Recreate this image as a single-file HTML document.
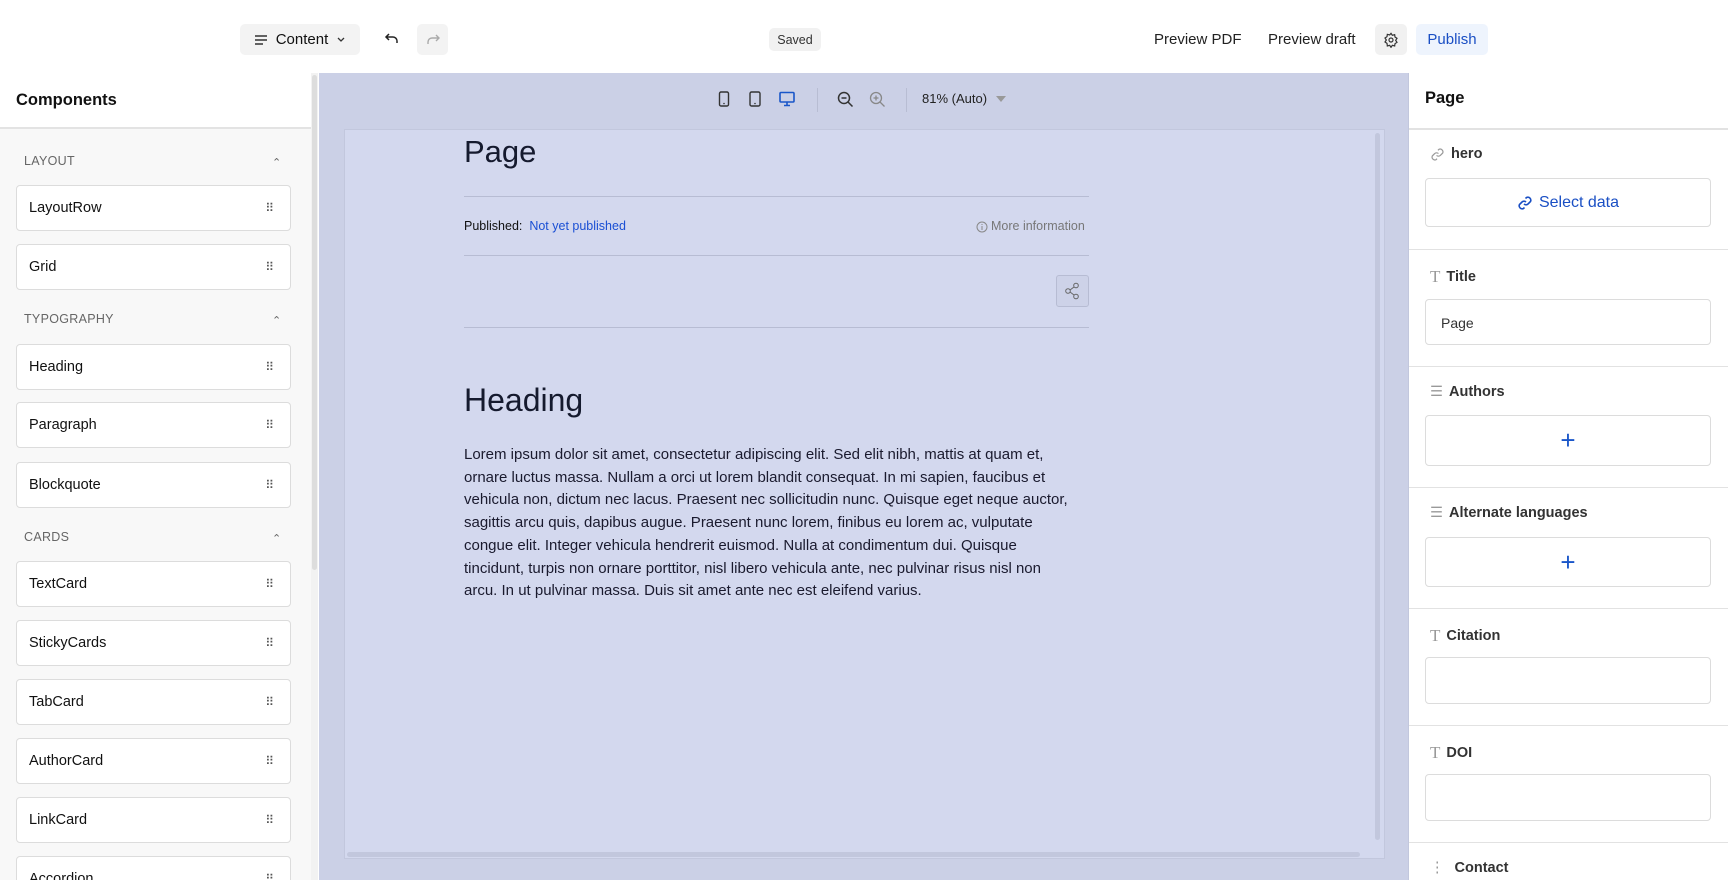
<!DOCTYPE html>
<html style="overflow:hidden"><head><meta charset="utf-8"><style>
*{box-sizing:border-box;margin:0;padding:0}
html,body{width:1728px;height:880px;overflow:hidden}
body{background:#fff;font-family:"Liberation Sans",sans-serif;color:#111}
#w{position:relative;width:1728px;height:880px;overflow:hidden}
.a{position:absolute}
.btn{position:absolute;border-radius:5px;display:flex;align-items:center;justify-content:center;font-size:15px}
.card{position:absolute;left:16px;width:275px;height:46px;border:1px solid #dcdcdc;border-radius:4px;background:#fff;font-size:14.5px;padding-left:12px;display:flex;align-items:center}
.card:after{content:"⠿";position:absolute;right:16px;font-size:12px;color:#555}
.sec{position:absolute;left:24px;font-size:12.5px;color:#666;letter-spacing:.3px}
.sec:after{content:"⌃";position:absolute;left:248px;top:2px;font-size:11px;color:#666}
.lbl{position:absolute;left:1430px;font-size:14.5px;font-weight:bold;color:#333;display:flex;align-items:center;gap:6px}
.box{position:absolute;left:1425px;width:286px;border:1px solid #dcdcdc;border-radius:4px;background:#fff}
.hr{position:absolute;left:1409px;width:319px;height:1px;background:#e2e2e2}
.plus{display:flex;align-items:center;justify-content:center;color:#1a56c9;font-size:26px;font-weight:300}
p.t{position:absolute;left:464px;width:621px;font-size:15px;line-height:22.7px;color:#1a1a2e}
</style></head><body><div id="w">
<div class="btn" style="left:240px;top:24px;width:120px;height:31px;background:#f3f3f3;gap:8px">
<svg width="14" height="12" viewBox="0 0 14 12"><path d="M1 2h12M1 6h12M1 10h8" stroke="#333" stroke-width="1.4"/></svg>Content
<svg width="10" height="8" viewBox="0 0 10 8"><path d="M2 2l3 3 3-3" stroke="#333" stroke-width="1.3" fill="none"/></svg></div>
<svg class="a" style="left:384px;top:32px" width="16" height="14" viewBox="0 0 16 14"><path d="M5 2L2 5l3 3M2 5h7a4 4 0 0 1 4 4v2" stroke="#222" stroke-width="1.5" fill="none"/></svg>
<div class="btn" style="left:417px;top:24px;width:31px;height:31px;background:#f3f3f3"><svg width="16" height="14" viewBox="0 0 16 14"><path d="M11 2l3 3-3 3M14 5H7a4 4 0 0 0-4 4v2" stroke="#aaa" stroke-width="1.4" fill="none"/></svg></div>
<div class="btn" style="left:769px;top:28px;width:52px;height:23px;background:#f1f1f1;font-size:12.5px;color:#333">Saved</div>
<div class="a" style="left:1154px;top:31px;font-size:15px;color:#222">Preview PDF</div>
<div class="a" style="left:1268px;top:31px;font-size:15px;color:#222">Preview draft</div>
<div class="btn" style="left:1375px;top:24px;width:32px;height:31px;background:#f1f1f1"><svg width="16" height="16" viewBox="0 0 24 24" fill="none" stroke="#333" stroke-width="1.8"><circle cx="12" cy="12" r="3"/><path d="M12 2l2 3 3.5-1 .5 3.5 3 2-2 3 2 3-3 2-.5 3.5-3.5-1-2 3-2-3-3.5 1L6 17l-3-2 2-3-2-3 3-2 .5-3.5 3.5 1z"/></svg></div>
<div class="btn" style="left:1416px;top:24px;width:72px;height:31px;background:#eef4fd;color:#1a4fc4">Publish</div>
<div class="a" style="left:0;top:73px;width:312px;height:56px;border-bottom:2px solid #e3e3e3;background:#fff"><div class="a" style="left:16px;top:18px;font-size:16.5px;font-weight:bold">Components</div></div>
<div class="a" style="left:0;top:129px;width:312px;height:751px;background:#f8f8f8"></div>
<div class="a" style="left:311px;top:73px;width:7px;height:807px;background:#f2f2f2"></div>
<div class="a" style="left:312px;top:75px;width:5px;height:495px;background:#ddd;border-radius:3px"></div>
<div class="sec" style="top:154px">LAYOUT</div>
<div class="card" style="top:185px">LayoutRow</div>
<div class="card" style="top:244px">Grid</div>
<div class="sec" style="top:312px">TYPOGRAPHY</div>
<div class="card" style="top:344px">Heading</div>
<div class="card" style="top:402px">Paragraph</div>
<div class="card" style="top:462px">Blockquote</div>
<div class="sec" style="top:530px">CARDS</div>
<div class="card" style="top:561px">TextCard</div>
<div class="card" style="top:620px">StickyCards</div>
<div class="card" style="top:679px">TabCard</div>
<div class="card" style="top:738px">AuthorCard</div>
<div class="card" style="top:797px">LinkCard</div>
<div class="card" style="top:856px">Accordion</div>
<div class="a" style="left:319px;top:73px;width:1090px;height:807px;background:#cbd0e6"></div>
<svg class="a" style="left:718px;top:91px" width="12" height="16" viewBox="0 0 12 16"><rect x="1.5" y="1" width="9" height="14" rx="1.5" stroke="#333" stroke-width="1.4" fill="none"/><circle cx="6" cy="12.5" r=".8" fill="#333"/></svg>
<svg class="a" style="left:749px;top:91px" width="12" height="16" viewBox="0 0 12 16"><rect x="1" y="1" width="10" height="14" rx="1.5" stroke="#333" stroke-width="1.4" fill="none"/><circle cx="6" cy="12.5" r=".8" fill="#333"/></svg>
<svg class="a" style="left:779px;top:91px" width="16" height="16" viewBox="0 0 16 16"><rect x="1" y="1.5" width="14" height="9.5" rx="1" stroke="#1a56c9" stroke-width="1.6" fill="none"/><path d="M8 11v3M5 14.5h6" stroke="#1a56c9" stroke-width="1.6"/></svg>
<div class="a" style="left:817px;top:88px;width:1px;height:24px;background:#b8bdd3"></div>
<svg class="a" style="left:837px;top:91px" width="17" height="17" viewBox="0 0 17 17"><circle cx="7" cy="7" r="5.5" stroke="#333" stroke-width="1.5" fill="none"/><path d="M11 11l4.5 4.5M4.5 7h5" stroke="#333" stroke-width="1.5"/></svg>
<svg class="a" style="left:869px;top:91px" width="17" height="17" viewBox="0 0 17 17"><circle cx="7" cy="7" r="5.5" stroke="#888" stroke-width="1.3" fill="none"/><path d="M11 11l4.5 4.5M4.5 7h5M7 4.5v5" stroke="#888" stroke-width="1.3"/></svg>
<div class="a" style="left:906px;top:88px;width:1px;height:24px;background:#b8bdd3"></div>
<div class="a" style="left:922px;top:91px;font-size:13px;color:#222">81% (Auto)</div>
<div class="a" style="left:996px;top:96px;width:0;height:0;border-left:5px solid transparent;border-right:5px solid transparent;border-top:6px solid #999"></div>
<div class="a" style="left:344px;top:129px;width:1041px;height:730px;background:#d3d8ee;border:1px solid #c2c7dd"></div>
<div class="a" style="left:1375px;top:133px;width:5px;height:707px;background:#c2c7dd;border-radius:3px"></div>
<div class="a" style="left:347px;top:852px;width:1013px;height:5px;background:#c2c7dd;border-radius:3px"></div>
<div class="a" style="left:464px;top:134px;font-size:31px;color:#151a2e">Page</div>
<div class="a" style="left:464px;top:196px;width:625px;height:1px;background:#b7bcd3"></div>
<div class="a" style="left:464px;top:219px;font-size:12.5px;line-height:15px;color:#111">Published:&nbsp; <span style="color:#1a4fd4">Not yet published</span></div>
<div class="a" style="left:976px;top:219px;font-size:12.5px;line-height:15px;color:#777;display:flex;align-items:center;gap:3px"><svg width="12" height="12" viewBox="0 0 12 12"><circle cx="6" cy="6" r="5" stroke="#888" fill="none"/><path d="M6 5v4M6 3v1" stroke="#888"/></svg>More information</div>
<div class="a" style="left:464px;top:255px;width:625px;height:1px;background:#b7bcd3"></div>
<div class="a" style="left:1056px;top:275px;width:33px;height:32px;border:1px solid #b7bcd3;border-radius:3px;background:#cdd2e8"></div>
<svg class="a" style="left:1064px;top:282px" width="17" height="18" viewBox="0 0 17 18"><circle cx="12" cy="3.5" r="2.3" stroke="#666" fill="none"/><circle cx="4" cy="9" r="2.3" stroke="#666" fill="none"/><circle cx="12" cy="14.5" r="2.3" stroke="#666" fill="none"/><path d="M6 8l4-3M6 10l4 3" stroke="#666"/></svg>
<div class="a" style="left:464px;top:327px;width:625px;height:1px;background:#b7bcd3"></div>
<div class="a" style="left:464px;top:382px;font-size:32px;color:#151a2e">Heading</div>
<p class="t" style="top:444px">Lorem ipsum dolor sit amet, consectetur adipiscing elit. Sed elit nibh, mattis at quam et, ornare luctus massa. Nullam a orci ut lorem blandit consequat. In mi sapien, faucibus et vehicula non, dictum nec lacus. Praesent nec sollicitudin nunc. Quisque eget neque auctor, sagittis arcu quis, dapibus augue. Praesent nunc lorem, finibus eu lorem ac, vulputate<br>congue elit. Integer vehicula hendrerit euismod. Nulla at condimentum dui. Quisque<br>tincidunt, turpis non ornare porttitor, nisl libero vehicula ante, nec pulvinar risus nisl non<br>arcu. In ut pulvinar massa. Duis sit amet ante nec est eleifend varius.</p>
<div class="a" style="left:1408px;top:73px;width:1px;height:807px;background:#c2c7dd"></div>
<div class="a" style="left:1425px;top:89px;font-size:16.5px;font-weight:bold">Page</div>
<div class="hr" style="top:128px;height:2px"></div>
<div class="lbl" style="top:146px"><svg width="15" height="15" viewBox="0 0 16 16" fill="none" stroke="#999" stroke-width="1.3"><path d="M7 9a3 3 0 0 0 4 0l2.5-2.5a3 3 0 0 0-4-4L8.5 3.5M9 7a3 3 0 0 0-4 0L2.5 9.5a3 3 0 0 0 4 4l1-1"/></svg>hero</div>
<div class="box plus" style="top:178px;height:49px;font-size:16px;color:#1a4fc4;gap:6px"><svg width="16" height="16" viewBox="0 0 16 16" fill="none" stroke="#1a4fc4" stroke-width="1.6"><path d="M7 9a3 3 0 0 0 4 0l2.5-2.5a3 3 0 0 0-4-4L8.5 3.5M9 7a3 3 0 0 0-4 0L2.5 9.5a3 3 0 0 0 4 4l1-1"/></svg>Select data</div>
<div class="hr" style="top:249px"></div>
<div class="lbl" style="top:267px"><span style="color:#999;font-weight:normal;font-family:'Liberation Serif',serif;font-size:17px">T</span>Title</div>
<div class="box" style="top:299px;height:46px;font-size:14px;color:#333;padding:15px 0 0 15px">Page</div>
<div class="hr" style="top:366px"></div>
<div class="lbl" style="top:384px"><span style="color:#999;font-weight:normal">☰</span>Authors</div>
<div class="box plus" style="top:415px;height:51px">+</div>
<div class="hr" style="top:487px"></div>
<div class="lbl" style="top:505px"><span style="color:#999;font-weight:normal">☰</span>Alternate languages</div>
<div class="box plus" style="top:537px;height:50px">+</div>
<div class="hr" style="top:608px"></div>
<div class="lbl" style="top:626px"><span style="color:#999;font-weight:normal;font-family:'Liberation Serif',serif;font-size:17px">T</span>Citation</div>
<div class="box" style="top:657px;height:47px"></div>
<div class="hr" style="top:725px"></div>
<div class="lbl" style="top:743px"><span style="color:#999;font-weight:normal;font-family:'Liberation Serif',serif;font-size:17px">T</span>DOI</div>
<div class="box" style="top:774px;height:47px"></div>
<div class="hr" style="top:842px"></div>
<div class="lbl" style="top:860px"><span style="color:#999;font-weight:normal">⋮</span>&nbsp;Contact</div>
</div></body></html>
